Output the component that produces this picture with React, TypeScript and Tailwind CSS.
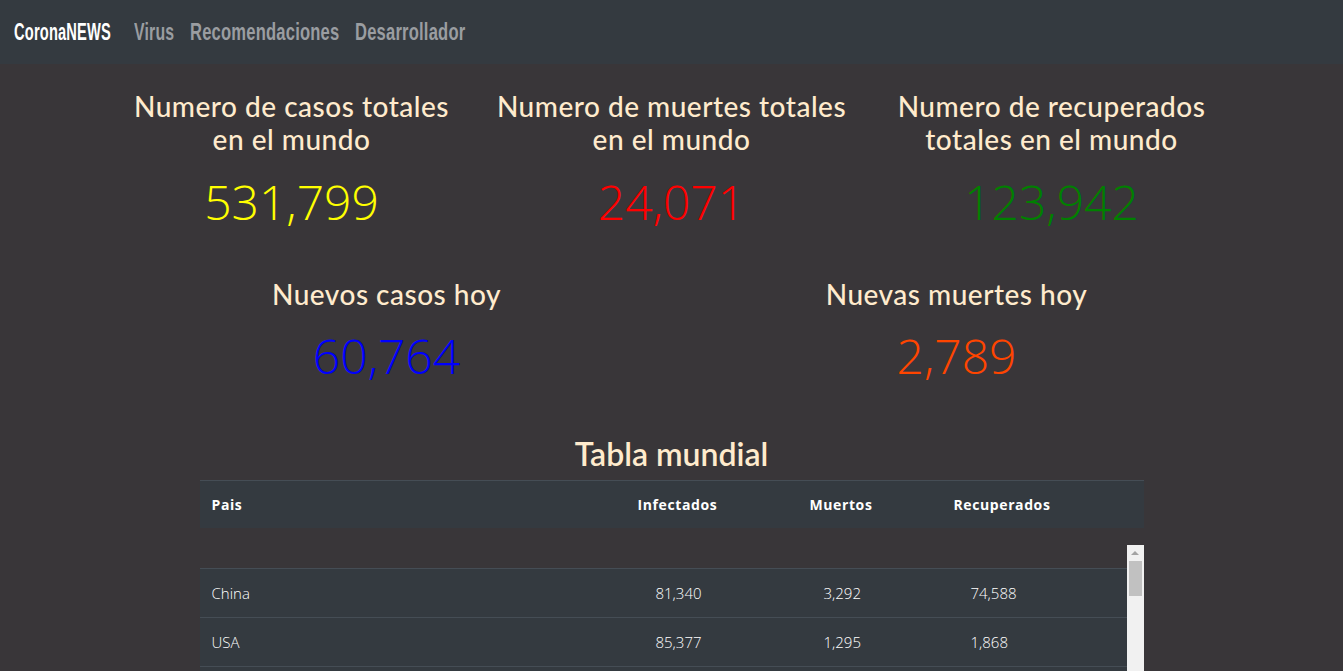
import React from "react";

const rows = [
  { pais: "China", inf: "81,340", mue: "3,292", rec: "74,588" },
  { pais: "USA", inf: "85,377", mue: "1,295", rec: "1,868" },
  { pais: "Italia", inf: "80,589", mue: "8,215", rec: "10,361" },
];

const heading = "text-[28px] leading-[33px] tracking-[0.5px] text-[#ffebcd] [font-family:Lato,'Open_Sans',sans-serif] font-medium";
const num = "text-[48px] leading-[58px] [font-family:'Open_Sans',sans-serif] font-light";

function Cond({ text, w, s }: { text: string; w: string; s: string }) {
  return (
    <span className={`${w} inline-block overflow-visible whitespace-nowrap`}>
      <span className={`${s} inline-block origin-left tracking-[0.3px]`}>{text}</span>
    </span>
  );
}

export default function App() {
  return (
    <div className="min-h-[671px] bg-[#393639] [font-family:'Open_Sans',sans-serif]">
      <nav className="h-[64px] bg-[#343a40] flex items-center px-[14px] gap-[24px] [font-family:'Liberation_Sans',Arial,sans-serif] font-bold text-[24px] leading-none">
        <span className="text-white">
          <Cond text="CoronaNEWS" w="w-[96px]" s="scale-x-[0.61]" />
        </span>
        <div className="flex gap-[16px] text-[#9a9da1]">
          <Cond text="Virus" w="w-[40px]" s="scale-x-[0.66]" />
          <Cond text="Recomendaciones" w="w-[149px]" s="scale-x-[0.69]" />
          <Cond text="Desarrollador" w="w-[110px]" s="scale-x-[0.69]" />
        </div>
      </nav>
      <div className="w-[1140px] mx-auto">
        <div className="grid grid-cols-3 pt-[26px] text-center">
          <div>
            <div className={heading}>Numero de casos totales<br />en el mundo</div>
            <div className={`${num} mt-[17px] text-[#ffff00]`}>531,799</div>
          </div>
          <div>
            <div className={heading}>Numero de muertes totales<br />en el mundo</div>
            <div className={`${num} mt-[17px] text-[#ff0000]`}>24,071</div>
          </div>
          <div>
            <div className={heading}>Numero de recuperados<br />totales en el mundo</div>
            <div className={`${num} mt-[17px] text-[#008000]`}>123,942</div>
          </div>
        </div>
        <div className="grid grid-cols-2 mt-[47px] text-center">
          <div>
            <div className={heading}>Nuevos casos hoy</div>
            <div className={`${num} mt-[16px] text-[#0000ff]`}>60,764</div>
          </div>
          <div>
            <div className={heading}>Nuevas muertes hoy</div>
            <div className={`${num} mt-[16px] text-[#ff4500]`}>2,789</div>
          </div>
        </div>
      </div>
      <div className="mt-[50px] text-center text-[32px] leading-[38px] font-semibold text-[#ffebcd] [font-family:Lato,'Open_Sans',sans-serif]">
        Tabla mundial
      </div>
      <div className="w-[944px] mx-auto mt-[7px]">
        <div className="flex h-[48px] items-center bg-[#343a40] border-t border-[#454d55] text-white text-[14px] font-bold tracking-[0.6px]">
          <div className="w-[426px] pl-3">Pais</div>
          <div className="w-[172px] pl-3">Infectados</div>
          <div className="w-[144px] pl-3">Muertos</div>
          <div className="flex-1 pl-3">Recuperados</div>
        </div>
        <div className="h-[17px]"></div>
        <div className="flex">
          <div className="flex-1">
            <div className="h-[23px]"></div>
            {rows.map((r) => (
              <div key={r.pais} className="flex h-[49px] items-center bg-[#343a40] border-t border-[#454d55] text-white text-[15px] font-light">
                <div className="w-[444px] pl-3">{r.pais}</div>
                <div className="w-[168px] pl-3">{r.inf}</div>
                <div className="w-[147px] pl-3">{r.mue}</div>
                <div className="flex-1 pl-3">{r.rec}</div>
              </div>
            ))}
          </div>
          <div className="w-[17px] bg-[#f1f1f1] flex flex-col items-center pt-[6px]">
            <div className="w-0 h-0 border-l-[4px] border-r-[4px] border-b-[4px] border-l-transparent border-r-transparent border-b-[#a3a3a3]"></div>
            <div className="mt-[6px] w-[13px] h-[35px] bg-[#c1c1c1]"></div>
          </div>
        </div>
      </div>
    </div>
  );
}
